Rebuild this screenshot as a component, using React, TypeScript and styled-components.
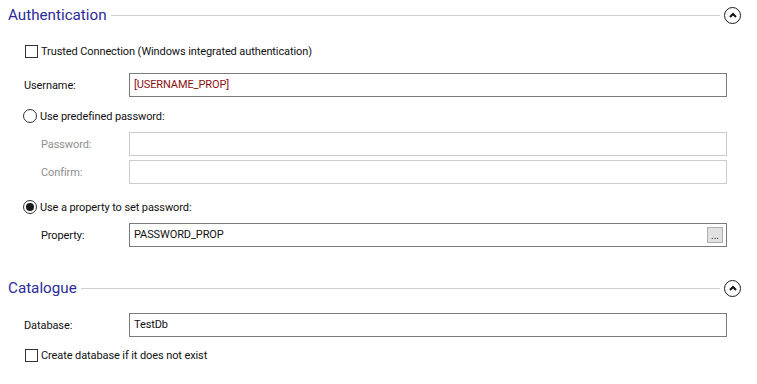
import React from "react";
import styled, { createGlobalStyle } from "styled-components";

const Global = createGlobalStyle`
  html, body { margin: 0; padding: 0; background: #fff; }
  body { font-family: "Segoe UI", Roboto, "Open Sans", sans-serif; }
`;

const Page = styled.div`
  width: 757px;
  height: 384px;
  box-sizing: border-box;
  display: flex;
  flex-direction: column;
  background: #fff;
  overflow: hidden;
`;

const Header = styled.div<{ $mt?: number }>`
  display: flex;
  align-items: center;
  height: 30px;
  margin-top: ${(p) => p.$mt ?? 0}px;
  padding-left: 8px;
  padding-right: 16px;
`;

const HeaderTitle = styled.span`
  font-family: "Segoe UI", Roboto, sans-serif;
  font-size: 15.2px;
  color: #2a2a98;
`;

const HeaderLine = styled.div`
  flex: 1;
  height: 1px;
  background: #cfcfcf;
  margin: 0 4px 0 4px;
`;

const Collapse = styled.div`
  width: 17px;
  height: 17px;
  box-sizing: border-box;
  border: 1.6px solid #1a1a1a;
  border-radius: 50%;
  display: flex;
  align-items: center;
  justify-content: center;
`;

const Row = styled.div<{ $mt: number; $indent?: number; $h?: number }>`
  display: flex;
  align-items: center;
  height: ${(p) => p.$h ?? 24}px;
  margin-top: ${(p) => p.$mt}px;
  padding-left: ${(p) => p.$indent ?? 24}px;
  padding-right: 30px;
`;

const Label = styled.span<{ $w: number; $disabled?: boolean }>`
  width: ${(p) => p.$w}px;
  flex: none;
  font-size: 11px;
  letter-spacing: -0.1px;
  color: ${(p) => (p.$disabled ? "#8e8e8e" : "#111")};
`;

const Field = styled.div<{ $disabled?: boolean }>`
  flex: 1;
  height: 24px;
  box-sizing: border-box;
  border: 1px solid ${(p) => (p.$disabled ? "#cccccc" : "#7a7a7a")};
  display: flex;
  align-items: center;
  padding: 0 3px 0 4px;
`;

const FieldText = styled.span<{ $color?: string }>`
  flex: 1;
  font-size: 11px;
  letter-spacing: -0.1px;
  color: ${(p) => p.$color ?? "#111"};
  margin-top: -2px;
`;

const Ellipsis = styled.div`
  width: 16px;
  height: 16px;
  box-sizing: border-box;
  background: #e1e1e1;
  border: 1px solid #adadad;
  font-size: 10px;
  line-height: 16px;
  text-align: center;
  color: #222;
`;

const Box = styled.span`
  width: 13px;
  height: 13px;
  box-sizing: border-box;
  border: 1px solid #333;
  background: #fff;
  flex: none;
  margin-right: 3px;
`;

const Radio = styled.span<{ $checked?: boolean }>`
  width: 14px;
  height: 14px;
  box-sizing: border-box;
  border: 1px solid #333;
  border-radius: 50%;
  background: #fff;
  flex: none;
  margin-right: 3px;
  display: flex;
  align-items: center;
  justify-content: center;
  &::after {
    content: "";
    display: ${(p) => (p.$checked ? "block" : "none")};
    width: 8px;
    height: 8px;
    border-radius: 50%;
    background: #1a1a1a;
  }
`;

const OptText = styled.span`
  font-size: 11px;
  letter-spacing: -0.1px;
  color: #111;
`;

const Chevron = () => (
  <svg width="8" height="6" viewBox="0 0 8 6">
    <path d="M1 5 L4 2 L7 5" fill="none" stroke="#111" strokeWidth="2" />
  </svg>
);

const SectionHeader = ({ title, mt }: { title: string; mt?: number }) => (
  <Header $mt={mt}>
    <HeaderTitle>{title}</HeaderTitle>
    <HeaderLine />
    <Collapse>
      <Chevron />
    </Collapse>
  </Header>
);

export default function App() {
  return (
    <Page>
      <Global />
      <SectionHeader title="Authentication" />
      <Row $mt={12} $h={18} $indent={25}>
        <Box />
        <OptText>Trusted Connection (Windows integrated authentication)</OptText>
      </Row>
      <Row $mt={13}>
        <Label $w={105}>Username:</Label>
        <Field>
          <FieldText $color="#8b1010">[USERNAME_PROP]</FieldText>
        </Field>
      </Row>
      <Row $mt={10} $h={18} $indent={23}>
        <Radio />
        <OptText>Use predefined password:</OptText>
      </Row>
      <Row $mt={7} $indent={41}>
        <Label $w={88} $disabled>Password:</Label>
        <Field $disabled />
      </Row>
      <Row $mt={4} $indent={41}>
        <Label $w={88} $disabled>Confirm:</Label>
        <Field $disabled />
      </Row>
      <Row $mt={14} $h={18} $indent={23}>
        <Radio $checked />
        <OptText>Use a property to set password:</OptText>
      </Row>
      <Row $mt={7} $indent={41}>
        <Label $w={88}>Property:</Label>
        <Field>
          <FieldText>PASSWORD_PROP</FieldText>
          <Ellipsis>...</Ellipsis>
        </Field>
      </Row>
      <SectionHeader title="Catalogue" mt={26} />
      <Row $mt={10}>
        <Label $w={105}>Database:</Label>
        <Field>
          <FieldText>TestDb</FieldText>
        </Field>
      </Row>
      <Row $mt={9} $h={18} $indent={25}>
        <Box />
        <OptText>Create database if it does not exist</OptText>
      </Row>
    </Page>
  );
}
